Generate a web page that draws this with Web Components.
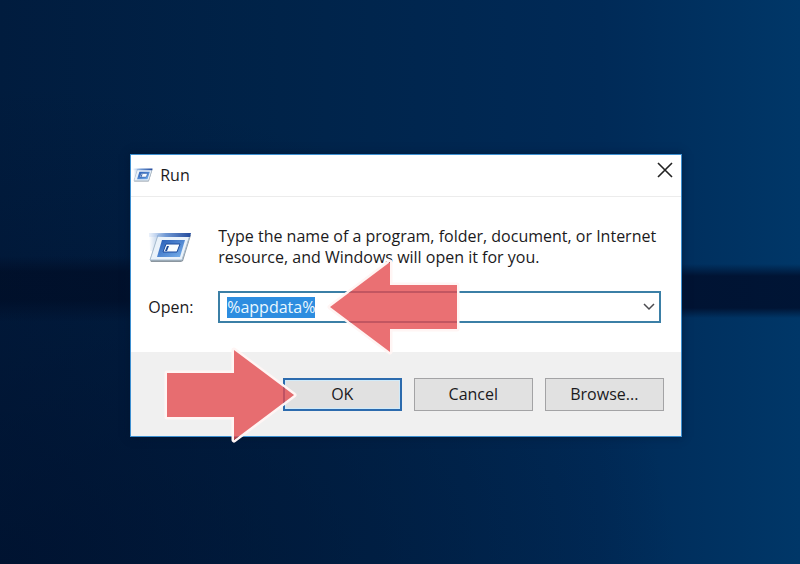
<!DOCTYPE html>
<html lang="en">
<head>
<meta charset="utf-8">
<title>Run</title>
<style>
    body {
        margin: 0;
        font-family: "Open Sans", "Noto Sans", sans-serif;
        font-size: 16px;
        line-height: 21px;
        color: #1b1a1c;
    }
</style>
</head>
<body>
<desk-top>
    <run-dialog heading="Run">
        Type the name of a program, folder, document, or Internet resource, and Windows will open it for you.
        <combo-field slot="field" label="Open:" value="%appdata%">
            <pointer-arrow slot="pointer" direction="left"></pointer-arrow>
        </combo-field>
        <dialog-button slot="actions" primary>OK
            <pointer-arrow slot="pointer" direction="right"></pointer-arrow>
        </dialog-button>
        <dialog-button slot="actions">Cancel</dialog-button>
        <dialog-button slot="actions">Browse...</dialog-button>
    </run-dialog>
</desk-top>

<script>
class DeskTop extends HTMLElement {
    constructor() {
        super();
        this.attachShadow({ mode: 'open' });
        this.shadowRoot.innerHTML = `
            <style>
                :host {
                    display: grid;
                    place-items: center;
                    box-sizing: border-box;
                    min-height: 100vh;
                    padding: 27px 0 0 12px;
                    background:
                        linear-gradient(transparent 256px, #000c24aa 272px, #000c24aa 300px, transparent 322px) left / 50% 100% no-repeat,
                        linear-gradient(transparent 264px, #000c28cc 276px, #000c28cc 308px, transparent 318px) right / 50% 100% no-repeat,
                        radial-gradient(ellipse at 0 100%, #00102cbb, transparent 60%),
                        linear-gradient(90deg, #011c3e, #002349 35%, #002a57 75%, #003768);
                }
            </style>
            <slot></slot>`;
    }
}

class RunIcon extends HTMLElement {
    constructor() {
        super();
        this.attachShadow({ mode: 'open' });
        this.shadowRoot.innerHTML = `
            <style>
                :host { display: block; width: 44px; }
                svg { display: block; width: 100%; }
            </style>
            <svg viewBox="0 0 44 31" aria-hidden="true">
                <defs>
                    <linearGradient id="bar">
                        <stop offset="0" stop-color="#9bbbe8" stop-opacity="0.2"/>
                        <stop offset="0.4" stop-color="#6f98d4"/>
                        <stop offset="1" stop-color="#234a9c"/>
                    </linearGradient>
                    <linearGradient id="pane" x2="1" y2="1">
                        <stop offset="0" stop-color="#2459b4"/>
                        <stop offset="1" stop-color="#7bb4ee"/>
                    </linearGradient>
                    <linearGradient id="trail">
                        <stop offset="0" stop-color="#b9cee9" stop-opacity="0"/>
                        <stop offset="1" stop-color="#b9cee9"/>
                    </linearGradient>
                </defs>
                <path d="M1 5h10L6 19H2z" fill="url(#trail)"/>
                <path d="M10 3h33l-8 26-2 1H3l-1-2z" fill="#8b969f"/>
                <path d="M10 3h32l-8 25H2z" fill="#eaf2fa" stroke="#a9bdd0"/>
                <path d="M1 1h42l-1 4H1z" fill="url(#bar)"/>
                <path d="M14 8h23l-5 17H9z" fill="url(#pane)"/>
                <path d="M18 12h14l-3 8H15z" fill="#f8fcff" stroke="#1b4b9e"/>
                <path d="M19 14h2l-2 5h-2z" fill="#1d4a97"/>
            </svg>`;
    }
}

class PointerArrow extends HTMLElement {
    constructor() {
        super();
        this.attachShadow({ mode: 'open' });
        this.shadowRoot.innerHTML = `
            <style>
                :host {
                    display: block;
                    position: absolute;
                    top: 50%;
                    width: 132px;
                    height: 96px;
                    margin-top: -48px;
                    pointer-events: none;
                }
                :host([direction="left"]) { left: 108px; }
                :host([direction="right"]) { right: 106px; }
                :host([direction="left"]) svg { transform: scaleX(-1); }
                svg { display: block; overflow: visible; }
            </style>
            <svg width="132" height="96" viewBox="0 0 132 96" aria-hidden="true">
                <mask id="outside" maskUnits="userSpaceOnUse" x="-4" y="-4" width="140" height="104">
                    <path d="M-4-4h140v104H-4z" fill="#fff"/>
                    <path d="M3 26h67V3l60 45-60 45V70H3z" fill="#000"/>
                </mask>
                <path d="M3 26h67V3l60 45-60 45V70H3z" fill="none" stroke="#fff5f4" stroke-width="5" stroke-linejoin="round" mask="url(#outside)"/>
                <path d="M3 26h67V3l60 45-60 45V70H3z" fill="#e54c50" fill-opacity="0.8"/>
            </svg>`;
    }
}

class ComboField extends HTMLElement {
    constructor() {
        super();
        this.attachShadow({ mode: 'open' });
        this.shadowRoot.innerHTML = `
            <style>
                :host {
                    display: grid;
                    grid-template-columns: 70px 1fr;
                    align-items: center;
                }
                .box {
                    position: relative;
                    display: flex;
                    align-items: center;
                    box-sizing: border-box;
                    height: 32px;
                    padding-left: 7px;
                    border: 2px solid #3b7fa6;
                    background: #fff;
                }
                input {
                    flex: 1;
                    min-width: 0;
                    height: 21px;
                    padding: 0;
                    border: 0;
                    outline: 0;
                    background: none;
                    font: inherit;
                    color: inherit;
                }
                input::selection { background: #2d8de0; color: #e9f8ff; }
                button {
                    display: grid;
                    place-items: center;
                    width: 20px;
                    height: 28px;
                    padding: 0;
                    border: 0;
                    background: none;
                }
            </style>
            <label for="value"></label>
            <div class="box">
                <input id="value" type="text" spellcheck="false" autocomplete="off">
                <button type="button" aria-label="Show history">
                    <svg width="12" height="8" viewBox="0 0 12 8" aria-hidden="true">
                        <path d="M1 1l5 5 5-5" fill="none" stroke="#4b4b4f" stroke-width="1.5"/>
                    </svg>
                </button>
                <slot name="pointer"></slot>
            </div>`;
    }

    connectedCallback() {
        const input = this.shadowRoot.querySelector('input');
        this.shadowRoot.querySelector('label').textContent = this.getAttribute('label');
        input.value = this.getAttribute('value');
        input.focus();
        input.select();
    }
}

class DialogButton extends HTMLElement {
    constructor() {
        super();
        this.attachShadow({ mode: 'open' });
        this.shadowRoot.innerHTML = `
            <style>
                :host { display: block; position: relative; width: 119px; }
                button {
                    display: block;
                    box-sizing: border-box;
                    width: 100%;
                    height: 33px;
                    padding: 0;
                    border: 1px solid #a3a3a5;
                    background: #e1e1e1;
                    font: inherit;
                    color: inherit;
                }
                :host([primary]) button {
                    border: 2px solid #2c6bae;
                    box-shadow: inset 0 0 0 1px #cfeafa;
                }
            </style>
            <button type="button"><slot></slot></button>
            <slot name="pointer"></slot>`;
    }
}

class RunDialog extends HTMLElement {
    constructor() {
        super();
        this.attachShadow({ mode: 'open' });
        this.shadowRoot.innerHTML = `
            <style>
                :host {
                    display: block;
                    box-sizing: border-box;
                    width: 70%;
                    min-width: 480px;
                    border: 1px solid #3d8fd0;
                    background: #fff;
                    box-shadow: 0 0 8px #00122c88;
                }
                header {
                    display: flex;
                    align-items: center;
                    gap: 7px;
                    height: 41px;
                    padding: 0 1px 0 2px;
                    border-bottom: 1px solid #ececec;
                }
                header run-icon { width: 20px; }
                h1 { flex: 1; margin: 0; font-size: 16px; font-weight: 400; }
                .close {
                    align-self: flex-start;
                    display: grid;
                    place-items: center;
                    width: 30px;
                    height: 30px;
                    padding: 0;
                    border: 0;
                    background: none;
                }
                .body {
                    display: flex;
                    flex-direction: column;
                    gap: 23px;
                    padding: 29px 20px 29px 17px;
                }
                .intro {
                    display: grid;
                    grid-template-columns: 70px 1fr;
                    align-items: center;
                }
                p { margin: 0; }
                footer {
                    display: flex;
                    justify-content: flex-end;
                    gap: 12px;
                    padding: 26px 17px 25px;
                    background: #f0f0f0;
                }
            </style>
            <header>
                <run-icon></run-icon>
                <h1></h1>
                <button class="close" type="button" aria-label="Close">
                    <svg width="16" height="16" viewBox="0 0 16 16" aria-hidden="true">
                        <path d="M1 1l14 14M15 1L1 15" fill="none" stroke="#222" stroke-width="1.6"/>
                    </svg>
                </button>
            </header>
            <div class="body">
                <div class="intro">
                    <run-icon></run-icon>
                    <p><slot></slot></p>
                </div>
                <slot name="field"></slot>
            </div>
            <footer><slot name="actions"></slot></footer>`;
    }

    connectedCallback() {
        this.shadowRoot.querySelector('h1').textContent = this.getAttribute('heading');
    }
}

customElements.define('run-icon', RunIcon);
customElements.define('pointer-arrow', PointerArrow);
customElements.define('dialog-button', DialogButton);
customElements.define('run-dialog', RunDialog);
customElements.define('combo-field', ComboField);
customElements.define('desk-top', DeskTop);
</script>
</body>
</html>
